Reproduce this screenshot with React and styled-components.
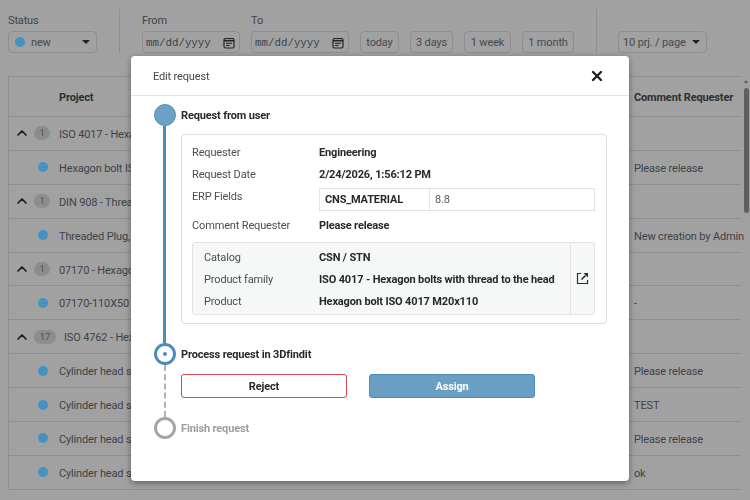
import React from 'react';
import styled, { createGlobalStyle } from 'styled-components';
import { ChevronUp, X } from 'lucide-react';

const GlobalStyle = createGlobalStyle`
  html, body { margin: 0; padding: 0; height: 100%; overflow: hidden; background: #a1a1a1; }
  body { font-family: Roboto, "Noto Sans", sans-serif; font-size: 11px; letter-spacing: -.15px; color: #3d4248; }
`;

const Page = styled.div`
  width: 750px;
  height: 500px;
  overflow: hidden;
  position: relative;
`;

const Toolbar = styled.div`
  display: flex;
  align-items: stretch;
  height: 76px;
  padding: 9px 0 0 8px;
  box-sizing: border-box;
`;

const FilterGroup = styled.div`
  display: flex;
  flex-direction: column;
  width: ${p => p.width}px;
  margin-right: ${p => p.mr || 0}px;
`;

const FilterLabel = styled.label`
  height: 22px;
  line-height: 24px;
  color: #3d4248;
`;

const Divider = styled.div`
  width: 1px;
  height: 44px;
  background: #8f8f8f;
  margin: 0 ${p => p.right}px 0 ${p => p.left}px;
`;

const SelectBox = styled.div`
  display: flex;
  align-items: center;
  height: 22px;
  width: ${p => p.width}px;
  box-sizing: border-box;
  border: 1px solid #8f8f8f;
  border-radius: 4px;
  padding: 0 6px 0 ${p => p.pl}px;
  white-space: nowrap;
  color: #45494e;
`;

const StatusText = styled.span`
  margin-left: 6px;
`;

const Caret = styled.span`
  margin-left: auto;
  width: 0;
  height: 0;
  border-left: 4px solid transparent;
  border-right: 4px solid transparent;
  border-top: 4px solid #222;
`;

const StatusDot = styled.span`
  width: 10px;
  height: 10px;
  border-radius: 50%;
  background: #4392c0;
  flex: none;
`;

const DateField = styled.div`
  display: flex;
  align-items: center;
  justify-content: space-between;
  width: 98px;
  height: 22px;
  box-sizing: border-box;
  border: 1px solid #8f8f8f;
  border-radius: 4px;
  padding: 1px 4px 0 3px;
  font-family: "Liberation Mono", monospace;
  font-size: 10.8px;
  letter-spacing: 0;
  color: #3d4248;
`;

const Presets = styled.div`
  display: flex;
  gap: 11px;
  margin-top: 22px;
`;

const PresetButton = styled.div`
  height: 22px;
  width: ${p => p.width}px;
  line-height: 22px;
  text-align: center;
  box-sizing: border-box;
  border: 1px solid #8f8f8f;
  border-radius: 4px;
  color: #45494e;
`;

const PageSizeWrap = styled.div`
  margin-top: 22px;
`;

const Table = styled.div`
  margin: 0 9px 0 8px;
  border-left: 1px solid #8f8f8f;
`;

const HeaderRow = styled.div`
  display: flex;
  align-items: center;
  height: 41px;
  border-top: 1px solid #8f8f8f;
  border-bottom: 1px solid #8f8f8f;
  box-sizing: border-box;
  font-weight: 700;
  color: #2b2f33;
`;

const Row = styled.div`
  display: flex;
  align-items: center;
  height: 33.9px;
  box-sizing: border-box;
  border-bottom: 1px solid #8f8f8f;
  color: #3d4248;
`;

const LeadCell = styled.div`
  width: 50px;
  flex: none;
  display: flex;
  align-items: center;
  justify-content: ${p => p.center ? 'flex-end' : 'flex-start'};
  padding-right: ${p => p.center ? 11 : 0}px;
  box-sizing: border-box;
`;

const GroupCell = styled.div`
  flex: none;
  display: flex;
  align-items: center;
  gap: 4px;
  padding-left: 5px;
  width: 50px;
  box-sizing: border-box;
  color: #1c1c1c;
`;

const CountBadge = styled.span`
  min-width: 16px;
  height: 14px;
  line-height: 14px;
  padding: 0 ${p => p.wide ? 3 : 0}px;
  text-align: center;
  border-radius: 7px;
  background: #8d8d8d;
  color: #505050;
  font-size: 9.5px;
  flex: none;
  margin-right: ${p => p.wide ? -5 : 0}px;
`;

const ProjectCell = styled.div`
  width: 575px;
  flex: none;
  white-space: nowrap;
  overflow: hidden;
  padding-top: 2px;
  padding-left: ${p => p.pl || 0}px;
  box-sizing: border-box;
`;

const CommentCell = styled.div`
  white-space: nowrap;
  padding-top: 2px;
`;

const ScrollArrow = styled.span`
  position: absolute;
  right: 2px;
  top: 80px;
  width: 0;
  height: 0;
  border-left: 2.5px solid transparent;
  border-right: 2.5px solid transparent;
  border-bottom: 3px solid #5c5c5c;
`;

const ScrollThumb = styled.div`
  position: absolute;
  right: 1px;
  top: 88px;
  width: 5px;
  height: 125px;
  border-radius: 3px;
  background: #5f5f5f;
`;

const Overlay = styled.div`
  position: fixed;
  inset: 0;
  backdrop-filter: blur(.6px);
  display: flex;
  justify-content: center;
  align-items: flex-start;
  padding: 56px 0 0 10px;
`;

const Modal = styled.div`
  width: 498px;
  height: 425px;
  background: #fff;
  border-radius: 4px;
  box-shadow: 0 2px 6px rgba(0, 0, 0, .4);
  overflow: hidden;
`;

const ModalHeader = styled.div`
  display: flex;
  align-items: center;
  justify-content: space-between;
  height: 40px;
  box-sizing: border-box;
  padding: 0 24px 0 22px;
  border-bottom: 1px solid #e3e3e3;
  color: #44484c;
`;

const ModalTitle = styled.div`
  padding-top: 2px;
`;

const ModalBody = styled.div`
  display: flex;
  padding: 8px 22px 0 22px;
`;

const Rail = styled.div`
  width: 23px;
  flex: none;
  display: flex;
  flex-direction: column;
  align-items: center;
`;

const StepFull = styled.div`
  width: 22px;
  height: 22px;
  box-sizing: border-box;
  border-radius: 50%;
  background: #6aa1c4;
  border: 1px solid #4f8fb8;
  flex: none;
`;

const StepRing = styled.div`
  width: 22px;
  height: 22px;
  box-sizing: border-box;
  border-radius: 50%;
  border: 3px solid ${p => p.color};
  display: flex;
  align-items: center;
  justify-content: center;
  flex: none;
`;

const StepDot = styled.span`
  width: 4px;
  height: 4px;
  border-radius: 50%;
  background: #4a8dba;
`;

const SolidLine = styled.div`
  width: 3px;
  height: 217px;
  background: #4a8dba;
`;

const DashedLine = styled.div`
  width: 0;
  height: 52px;
  border-left: 2px dashed #b1b1b1;
`;

const StepContent = styled.div`
  flex: 1;
  padding-left: 5px;
  min-width: 0;
`;

const StepTitle = styled.div`
  height: 22px;
  line-height: 24px;
  font-weight: 700;
  color: ${p => p.muted ? '#9c9ea0' : '#26292c'};
`;

const Card = styled.div`
  margin: 8px 0 19px;
  width: 426px;
  height: 190px;
  box-sizing: border-box;
  border: 1px solid #dedede;
  border-radius: 4px;
  padding: 6px 11px 0 10px;
`;

const InfoRow = styled.div`
  display: flex;
  min-height: 22px;
  margin-top: ${p => p.mt || 0}px;
  align-items: ${p => p.top ? 'flex-start' : 'center'};
`;

const InfoLabel = styled.div`
  width: 127px;
  flex: none;
  line-height: 20px;
  padding-top: 2px;
  color: #4a4e52;
`;

const InfoValue = styled.div`
  font-weight: 700;
  line-height: 20px;
  padding-top: 2px;
  color: #26292c;
  white-space: nowrap;
`;

const ErpTable = styled.div`
  display: flex;
  width: 276px;
  height: 23px;
  box-sizing: border-box;
  border: 1px solid #e3e3e3;
  margin-top: 3px;
`;

const ErpKey = styled.div`
  width: 110px;
  flex: none;
  box-sizing: border-box;
  padding-left: 5px;
  border-right: 1px solid #e3e3e3;
  line-height: 21px;
  font-weight: 700;
  color: #26292c;
`;

const ErpValue = styled.div`
  padding-left: 5px;
  line-height: 21px;
  color: #55595d;
`;

const ProductBox = styled.div`
  display: flex;
  margin-top: 6px;
  height: 73px;
  width: 403px;
  box-sizing: border-box;
  border: 1px solid #e3e3e3;
  border-radius: 3px;
  background: #f6f7f7;
`;

const ProductRows = styled.div`
  flex: 1;
  padding: 3px 0 0 11px;
  border-right: 1px solid #e3e3e3;
  min-width: 0;
`;

const ProductLabel = styled(InfoLabel)`
  width: 115px;
`;

const OpenCell = styled.div`
  width: 23px;
  flex: none;
  display: flex;
  align-items: center;
  justify-content: center;
`;

const Actions = styled.div`
  display: flex;
  gap: 22px;
  margin: 9px 0 19px;
`;

const ActionButton = styled.button`
  width: 166px;
  height: 24px;
  box-sizing: border-box;
  padding: 0;
  border-radius: 3px;
  border: 1px solid ${p => p.primary ? '#4d8cb8' : '#d9434e'};
  background: ${p => p.primary ? '#6a9fc4' : '#fff'};
  color: ${p => p.primary ? '#fff' : '#26292c'};
  font-family: inherit;
  font-size: 11px;
  letter-spacing: inherit;
  font-weight: 700;
`;

const rows = [
  { group: '1', text: 'ISO 4017 - Hexagon bolts with thread to the head' },
  { text: 'Hexagon bolt ISO 4017 M20x110', comment: 'Please release' },
  { group: '1', text: 'DIN 908 - Threaded plugs' },
  { text: 'Threaded Plug, DIN 908', comment: 'New creation by Admin' },
  { group: '1', text: '07170 - Hexagon bolts' },
  { text: '07170-110X50', comment: '-' },
  { group: '17', text: 'ISO 4762 - Hexagon socket head cap screws' },
  { text: 'Cylinder head screw ISO 4762', comment: 'Please release' },
  { text: 'Cylinder head screw ISO 4762', comment: 'TEST' },
  { text: 'Cylinder head screw ISO 4762', comment: 'Please release' },
  { text: 'Cylinder head screw ISO 4762', comment: 'ok' },
];

const CalendarIcon = () => (
  <svg width="12" height="12" viewBox="0 0 12 12" fill="none" stroke="#222">
    <rect x="1" y="1.5" width="10" height="9.5" rx="1.5" strokeWidth="1.2" />
    <path d="M1 3.7h10" strokeWidth="1.6" />
    <path d="M3 6.3h6M3 8.5h3.5" strokeWidth="1" />
  </svg>
);

const OpenIcon = () => (
  <svg width="13" height="13" viewBox="0 0 13 13" fill="none" stroke="#2c2f32">
    <path d="M5 1.5H1.5v10h10V8" strokeWidth="1.2" />
    <path d="M5.5 7.5L9.5 3.5" strokeWidth="1.6" />
    <path d="M7.5 1H12v4.5z" fill="#2c2f32" stroke="none" />
  </svg>
);

export default function App() {
  return (
    <Page>
      <GlobalStyle />
      <Toolbar>
        <FilterGroup width={89}>
          <FilterLabel>Status</FilterLabel>
          <SelectBox width={89} pl={6}>
            <StatusDot />
            <StatusText>new</StatusText>
            <Caret />
          </SelectBox>
        </FilterGroup>
        <Divider left={22} right={22} />
        <FilterGroup width={98} mr={11}>
          <FilterLabel>From</FilterLabel>
          <DateField>mm/dd/yyyy<CalendarIcon /></DateField>
        </FilterGroup>
        <FilterGroup width={98} mr={11}>
          <FilterLabel>To</FilterLabel>
          <DateField>mm/dd/yyyy<CalendarIcon /></DateField>
        </FilterGroup>
        <Presets>
          <PresetButton width={39}>today</PresetButton>
          <PresetButton width={43}>3 days</PresetButton>
          <PresetButton width={47}>1 week</PresetButton>
          <PresetButton width={52}>1 month</PresetButton>
        </Presets>
        <Divider left={22} right={21} />
        <PageSizeWrap>
          <SelectBox width={89} pl={4}>10 prj. / page<Caret /></SelectBox>
        </PageSizeWrap>
      </Toolbar>

      <Table>
        <HeaderRow>
          <LeadCell />
          <ProjectCell>Project</ProjectCell>
          <CommentCell>Comment Requester</CommentCell>
        </HeaderRow>
        {rows.map((row, i) => (
          <Row key={i}>
            {row.group ? (
              <GroupCell>
                <ChevronUp size={16} strokeWidth={2.6} />
                <CountBadge wide={row.group.length > 1}>{row.group}</CountBadge>
              </GroupCell>
            ) : (
              <LeadCell center><StatusDot /></LeadCell>
            )}
            <ProjectCell pl={row.group && row.group.length > 1 ? 5 : 0}>{row.text}</ProjectCell>
            <CommentCell>{row.comment}</CommentCell>
          </Row>
        ))}
      </Table>
      <ScrollArrow />
      <ScrollThumb />

      <Overlay>
        <Modal>
          <ModalHeader>
            <ModalTitle>Edit request</ModalTitle>
            <X size={16} strokeWidth={3.6} color="#222" />
          </ModalHeader>
          <ModalBody>
            <Rail>
              <StepFull />
              <SolidLine />
              <StepRing color="#4a8dba"><StepDot /></StepRing>
              <DashedLine />
              <StepRing color="#a5a5a5" />
            </Rail>
            <StepContent>
              <StepTitle>Request from user</StepTitle>
              <Card>
                <InfoRow><InfoLabel>Requester</InfoLabel><InfoValue>Engineering</InfoValue></InfoRow>
                <InfoRow><InfoLabel>Request Date</InfoLabel><InfoValue>2/24/2026, 1:56:12 PM</InfoValue></InfoRow>
                <InfoRow top>
                  <InfoLabel>ERP Fields</InfoLabel>
                  <ErpTable>
                    <ErpKey>CNS_MATERIAL</ErpKey>
                    <ErpValue>8.8</ErpValue>
                  </ErpTable>
                </InfoRow>
                <InfoRow mt={3}><InfoLabel>Comment Requester</InfoLabel><InfoValue>Please release</InfoValue></InfoRow>
                <ProductBox>
                  <ProductRows>
                    <InfoRow><ProductLabel>Catalog</ProductLabel><InfoValue>CSN / STN</InfoValue></InfoRow>
                    <InfoRow><ProductLabel>Product family</ProductLabel><InfoValue>ISO 4017 - Hexagon bolts with thread to the head</InfoValue></InfoRow>
                    <InfoRow><ProductLabel>Product</ProductLabel><InfoValue>Hexagon bolt ISO 4017 M20x110</InfoValue></InfoRow>
                  </ProductRows>
                  <OpenCell><OpenIcon /></OpenCell>
                </ProductBox>
              </Card>
              <StepTitle>Process request in 3Dfindit</StepTitle>
              <Actions>
                <ActionButton>Reject</ActionButton>
                <ActionButton primary>Assign</ActionButton>
              </Actions>
              <StepTitle muted>Finish request</StepTitle>
            </StepContent>
          </ModalBody>
        </Modal>
      </Overlay>
    </Page>
  );
}
